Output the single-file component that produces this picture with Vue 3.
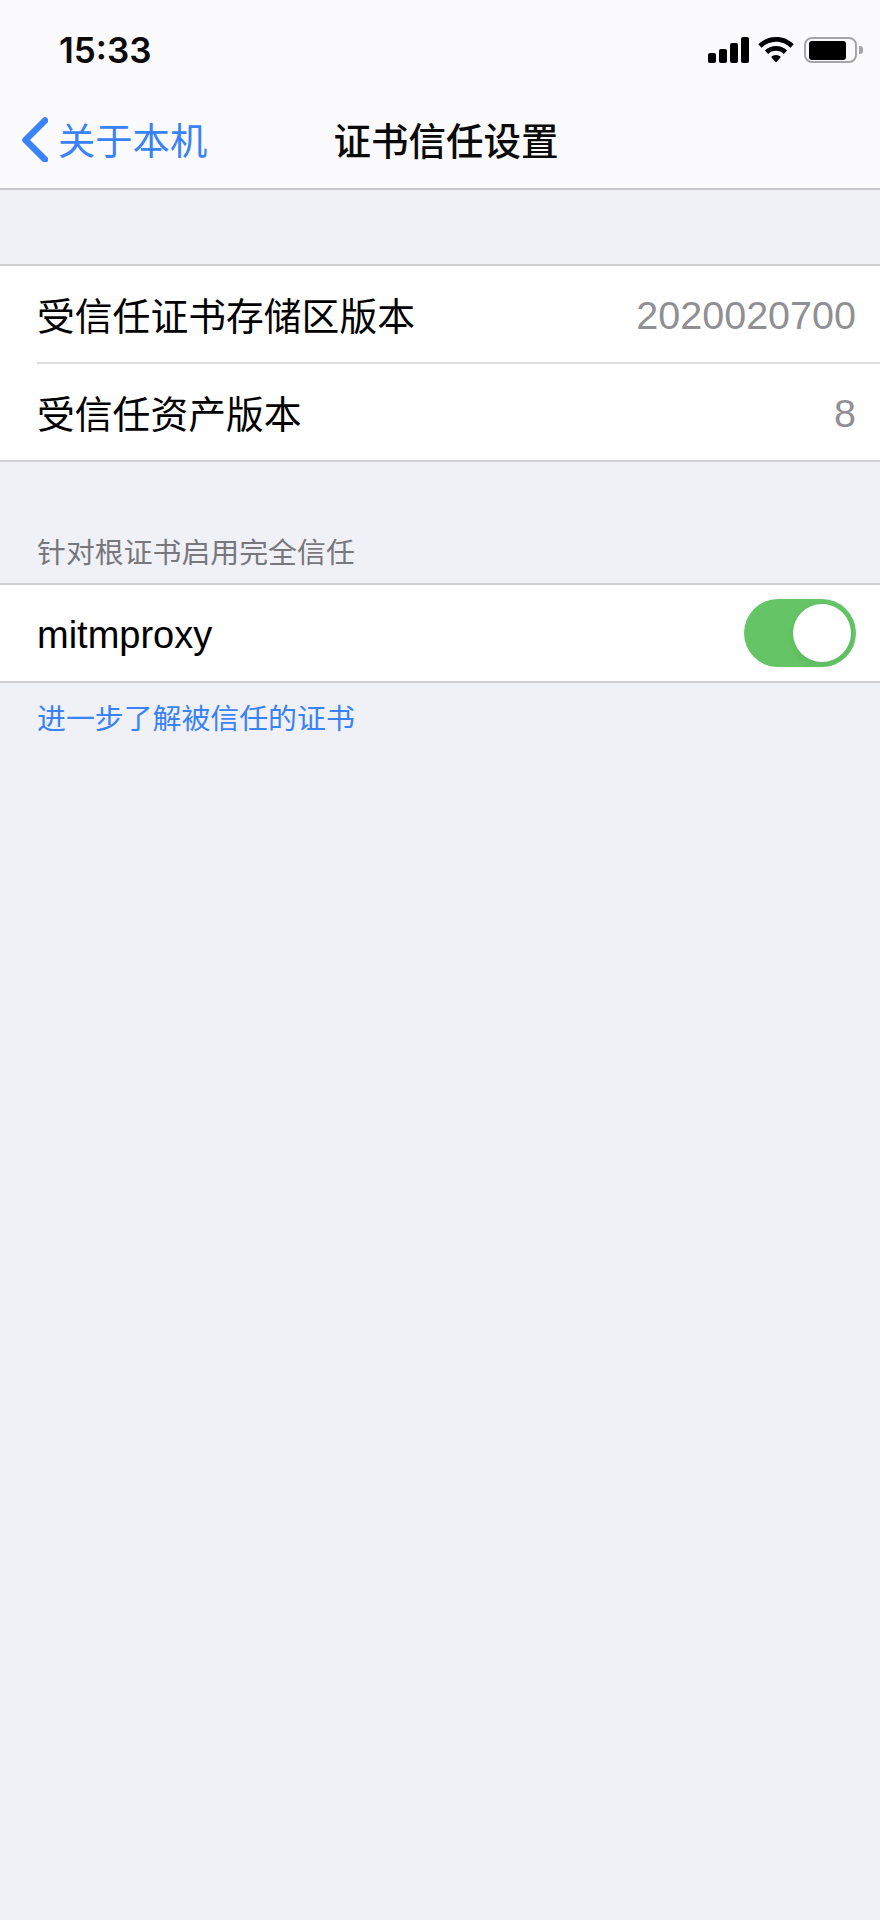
<template>
  <div class="screen">
    <header class="top">
      <div class="status">
        <span class="time">15:33</span>
        <div class="status-icons">
          <svg class="signal" width="41" height="26" viewBox="0 0 41 26">
            <rect x="0" y="16" width="8" height="10" rx="2" />
            <rect x="11" y="12" width="8" height="14" rx="2" />
            <rect x="22" y="6" width="8" height="20" rx="2" />
            <rect x="33" y="0" width="8" height="26" rx="2" />
          </svg>
          <svg class="wifi" width="36" height="26" viewBox="0 0 36 26">
            <path d="M18 0C11 0 5 2.600 0.300 7.200L3.600 10.800C7.300 7.100 12.400 4.800 18 4.800S28.700 7.100 32.400 10.800L35.700 7.200C31 2.600 25 0 18 0Z" />
            <path d="M18 9C13.700 9 9.800 10.700 6.900 13.500L10.200 17C12.200 15 15 13.800 18 13.800S23.800 15 25.800 17L29.100 13.500C26.200 10.700 22.300 9 18 9Z" />
            <path d="M18 18C16.200 18 14.500 18.700 13.200 19.900L18 25.500L22.800 19.900C21.500 18.700 19.800 18 18 18Z" />
          </svg>
          <div class="battery">
            <div class="battery-body"><div class="battery-level"></div></div>
            <div class="battery-cap"></div>
          </div>
        </div>
      </div>
      <nav class="nav">
        <div class="back">
          <svg width="28" height="46" viewBox="0 0 28 46">
            <path d="M25 4.500L5.500 24L25 43.500" fill="none" stroke="#3a82f7" stroke-width="6.500" stroke-linecap="round" stroke-linejoin="round" />
          </svg>
          <span>关于本机</span>
        </div>
        <div class="title">证书信任设置</div>
      </nav>
    </header>

    <section class="group first">
      <div class="row">
        <span class="label">受信任证书存储区版本</span>
        <span class="value">2020020700</span>
      </div>
      <div class="row">
        <span class="label">受信任资产版本</span>
        <span class="value">8</span>
      </div>
    </section>

    <div class="caption">针对根证书启用完全信任</div>
    <section class="group">
      <div class="row">
        <span class="label latin">mitmproxy</span>
        <div class="toggle"><div class="knob"></div></div>
      </div>
    </section>
    <div class="link">进一步了解被信任的证书</div>
  </div>
</template>

<script setup>
</script>

<style>
html, body { margin: 0; background: #f0f1f6; }
</style>

<style scoped>
.screen {
  width: 880px;
  height: 1920px;
  overflow: hidden;
  background: #f0f1f6;
  font-family: "Noto Sans CJK SC", "Liberation Sans", sans-serif;
  color: #000;
}
.top {
  height: 188px;
  background: #fbfbfd;
  border-bottom: 2px solid #c8c8cc;
}
.status {
  height: 100px;
  display: flex;
  justify-content: space-between;
  align-items: flex-start;
  padding: 0 17px 0 59px;
}
.time {
  font-family: Inter, "Liberation Sans", sans-serif;
  font-size: 35px;
  font-weight: 600;
  line-height: 42px;
  margin-top: 29px;
  color: #0a0a0a;
}
.status-icons {
  display: flex;
  align-items: center;
  margin-top: 37px;
}
.signal { fill: #000; margin-right: 9px; }
.wifi { fill: #000; margin-right: 10px; }
.battery { display: flex; align-items: center; }
.battery-body {
  padding: 1.500px 9px 1.500px 3px;
  border: 2px solid #a5a5a7;
  border-radius: 8px;
}
.battery-level { width: 37px; height: 19px; background: #000; border-radius: 3px; }
.battery-cap { width: 4px; height: 8px; margin-left: 2px; background: #a5a5a7; border-radius: 0 3px 3px 0; }
.nav {
  height: 88px;
  box-sizing: border-box;
  padding-left: 12px;
  padding-bottom: 10px;
  position: relative;
  display: flex;
  align-items: center;
  justify-content: center;
}
.back {
  position: absolute;
  left: 20px;
  top: 16px;
  display: flex;
  align-items: center;
  gap: 10px;
  color: #3a82f7;
  font-size: 37.300px;
  line-height: 46px;
}
.title {
  font-size: 37.500px;
  font-weight: 500;
  line-height: 46px;
  color: #0a0a0a;
}
.group {
  background: #fff;
  border-top: 2px solid #d0d0d4;
  border-bottom: 2px solid #d0d0d4;
}
.group.first { margin-top: 74px; }
.row {
  height: 96px;
  margin-left: 37px;
  padding-right: 24px;
  display: flex;
  align-items: center;
  justify-content: space-between;
}
.row + .row { border-top: 2px solid #dedee0; }
.label {
  font-size: 37.800px;
  line-height: 46px;
}
.label.latin {
  font-family: "Liberation Sans", sans-serif;
  font-size: 38px;
  margin-top: 3px;
}
.value {
  font-family: "Liberation Sans", sans-serif;
  font-size: 39.500px;
  margin-top: 2px;
  color: #909094;
}
.toggle {
  width: 112px;
  height: 68px;
  box-sizing: border-box;
  padding: 5px;
  background: #64c466;
  border-radius: 34px;
  display: flex;
  justify-content: flex-end;
}
.knob {
  width: 58px;
  height: 58px;
  background: #fff;
  border-radius: 50%;
  box-shadow: 0 3px 8px rgba(0, 0, 0, 0.06);
}
.caption, .link {
  font-size: 28.900px;
  line-height: 40px;
  padding-left: 37px;
}
.caption { color: #77777c; margin-top: 68px; height: 53px; }
.link { color: #3a82f7; margin-top: 13px; }
</style>
